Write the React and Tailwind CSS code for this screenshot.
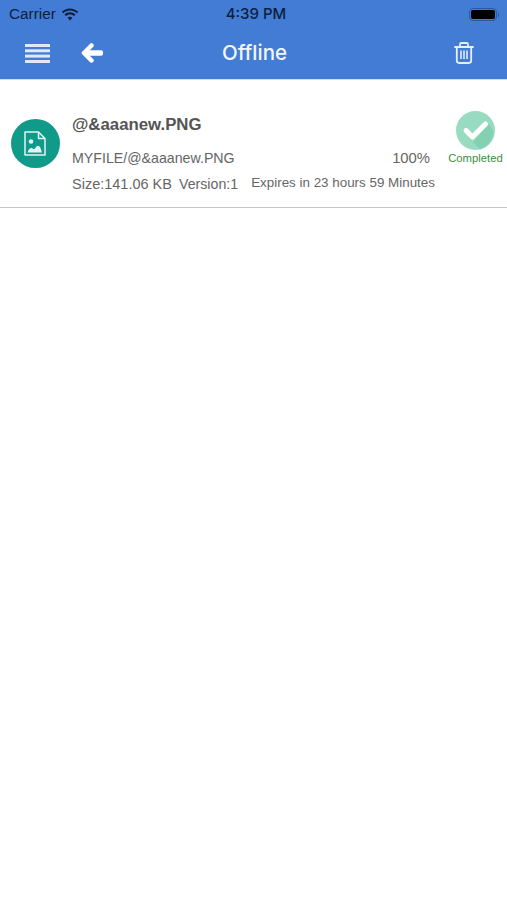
function Wifi() {
  return (
    <svg width="18" height="13" viewBox="0 0 18 13" fill="#0b1f3f">
      <path d="M9 2.600c2.600 0 5 1 6.800 2.700L17.200 3.800C15 1.700 12.100.4 9 .4S3 1.700.8 3.800l1.400 1.500C4 3.600 6.400 2.600 9 2.600z" />
      <path d="M9 6.400c1.600 0 3 .6 4.100 1.600l1.400-1.500C13 5.100 11.100 4.300 9 4.300S5 5.100 3.500 6.500L4.900 8C6 7 7.400 6.400 9 6.400z" />
      <path d="M9 8.800c-1 0-1.800.4-2.400 1L9 12.400l2.400-2.600c-.6-.6-1.400-1-2.400-1z" />
    </svg>
  );
}

function Battery() {
  return (
    <div className="flex items-center gap-[1px]">
      <div className="h-[13px] w-[28px] rounded-[4px] border border-[#2a5aa5] p-[1px]">
        <div className="h-full w-full rounded-[2px] bg-black" />
      </div>
      <div className="h-[4px] w-[1px] bg-[#2a5aa5]" />
    </div>
  );
}

function MenuIcon() {
  return (
    <svg width="25" height="19" viewBox="0 0 25 19" fill="#dfe9f9">
      <rect x="0" y="0" width="25" height="3" />
      <rect x="0" y="5.300" width="25" height="3" />
      <rect x="0" y="10.600" width="25" height="3" />
      <rect x="0" y="16" width="25" height="3" />
    </svg>
  );
}

function BackIcon() {
  return (
    <svg width="22" height="22" viewBox="0 0 22 22" fill="none" stroke="#fff" strokeLinecap="round" strokeLinejoin="round">
      <path d="M19.500 11H6" strokeWidth="5.500" />
      <path d="M10.500 3.500L3 11l7.500 7.500" strokeWidth="4.500" />
    </svg>
  );
}

function TrashIcon() {
  return (
    <svg width="20" height="22" viewBox="0 0 20 22" fill="none" stroke="#e8eefb" strokeWidth="1.800" strokeLinejoin="round">
      <path d="M1 5h18" strokeLinecap="round" />
      <path d="M6 4.500V2.400c0-.8.6-1.400 1.400-1.400h5.200c.8 0 1.400.6 1.400 1.400v2.100" />
      <path d="M2.800 5v13.600c0 1.300 1 2.400 2.400 2.400h9.600c1.400 0 2.400-1.100 2.400-2.400V5" />
      <path d="M7 8.500v8.500M10 8.500v8.500M13 8.500v8.500" strokeWidth="1.500" />
    </svg>
  );
}

function ImageFileIcon() {
  return (
    <svg width="22" height="25" viewBox="0 0 22 25" fill="none" stroke="#e4f4f1" strokeWidth="1.500" strokeLinejoin="round">
      <path d="M1 1h13.500L21 7.500V24H1z" />
      <path d="M14.500 1v6.500H21" />
      <circle cx="7" cy="10.500" r="2.300" fill="#e4f4f1" stroke="none" />
      <path d="M3.500 21.500c.8-2.700 2.300-4.600 3.800-4.600 1.200 0 1.700 1.200 2.700 1.200 1.300 0 2-3.300 4-3.300 1.900 0 3 3.300 4 6.700z" fill="#e4f4f1" stroke="none" />
    </svg>
  );
}

function CheckBadge() {
  return (
    <svg width="39" height="39" viewBox="0 0 39 39">
      <circle cx="19.500" cy="19.500" r="19.500" fill="#98dbc1" />
      <path d="M17 31L33 13l4 6.500A19.500 19.500 0 0 1 24 38.500z" fill="#83d0b3" />
      <path d="M10 19.500l6.500 6.500L29.500 13" fill="none" stroke="#fff" strokeWidth="5" strokeLinecap="round" strokeLinejoin="round" />
    </svg>
  );
}

export default function App() {
  return (
    <div className="h-[900px] w-[507px] overflow-hidden bg-white font-['Liberation_Sans',sans-serif]">
      {/* header */}
      <div className="bg-[#437cd5]">
        <div className="flex h-[27px] items-center justify-between pl-[9px] pr-[8px] pt-[2px]">
          <div className="flex w-[134px] items-center gap-[5px] text-[15.300px] text-[#0b1f3f]">
            <span>Carrier</span>
            <Wifi />
          </div>
          <span className="font-['Inter',sans-serif] text-[15px] font-medium text-[#0b1f3f]">4:39 PM</span>
          <div className="flex w-[130px] justify-end">
            <Battery />
          </div>
        </div>
        <div className="flex h-[53px] items-center justify-between border-b border-[#c9dbf5] pl-[25px] pr-[33px]">
          <div className="flex w-[110px] items-center gap-[31px]">
            <MenuIcon />
            <BackIcon />
          </div>
          <span className="font-['Inter',sans-serif] text-[20.500px] font-medium text-[#f2f6fd]">Offline</span>
          <div className="flex w-[100px] justify-end">
            <TrashIcon />
          </div>
        </div>
      </div>

      {/* offline file row */}
      <div className="flex h-[128px] border-b border-[#c4c4c4] pl-[11px] pr-[4px]">
        <div className="mt-[39px] flex h-[49px] w-[49px] shrink-0 items-center justify-center rounded-full bg-[#0f9a8a] pr-[2px]">
          <ImageFileIcon />
        </div>
        <div className="ml-[12px] flex w-[358px] flex-col whitespace-nowrap text-[#666666]">
          <div className="mt-[35px] text-[16.800px] font-bold leading-[20px] text-[#555555]">@&amp;aaanew.PNG</div>
          <div className="mt-[13px] flex justify-between text-[14.200px] leading-[20px]">
            <span>MYFILE/@&amp;aaanew.PNG</span>
            <span className="text-[14.800px]">100%</span>
          </div>
          <div className="mt-[5px] flex items-center text-[14.500px] leading-[20px]">
            <span>Size:141.06 KB</span>
            <span className="ml-[7px] text-[14.200px]">Version:1</span>
            <span className="mb-[2px] ml-[13px] text-[13.400px]">Expires in 23 hours 59 Minutes</span>
          </div>
        </div>
        <div className="ml-[18px] flex w-[55px] flex-col items-center">
          <div className="mt-[31px] h-[39px] w-[39px]">
            <CheckBadge />
          </div>
          <span className="mt-[1px] text-[11.300px] leading-[14px] text-[#3c8f3c]">Completed</span>
        </div>
      </div>
    </div>
  );
}
